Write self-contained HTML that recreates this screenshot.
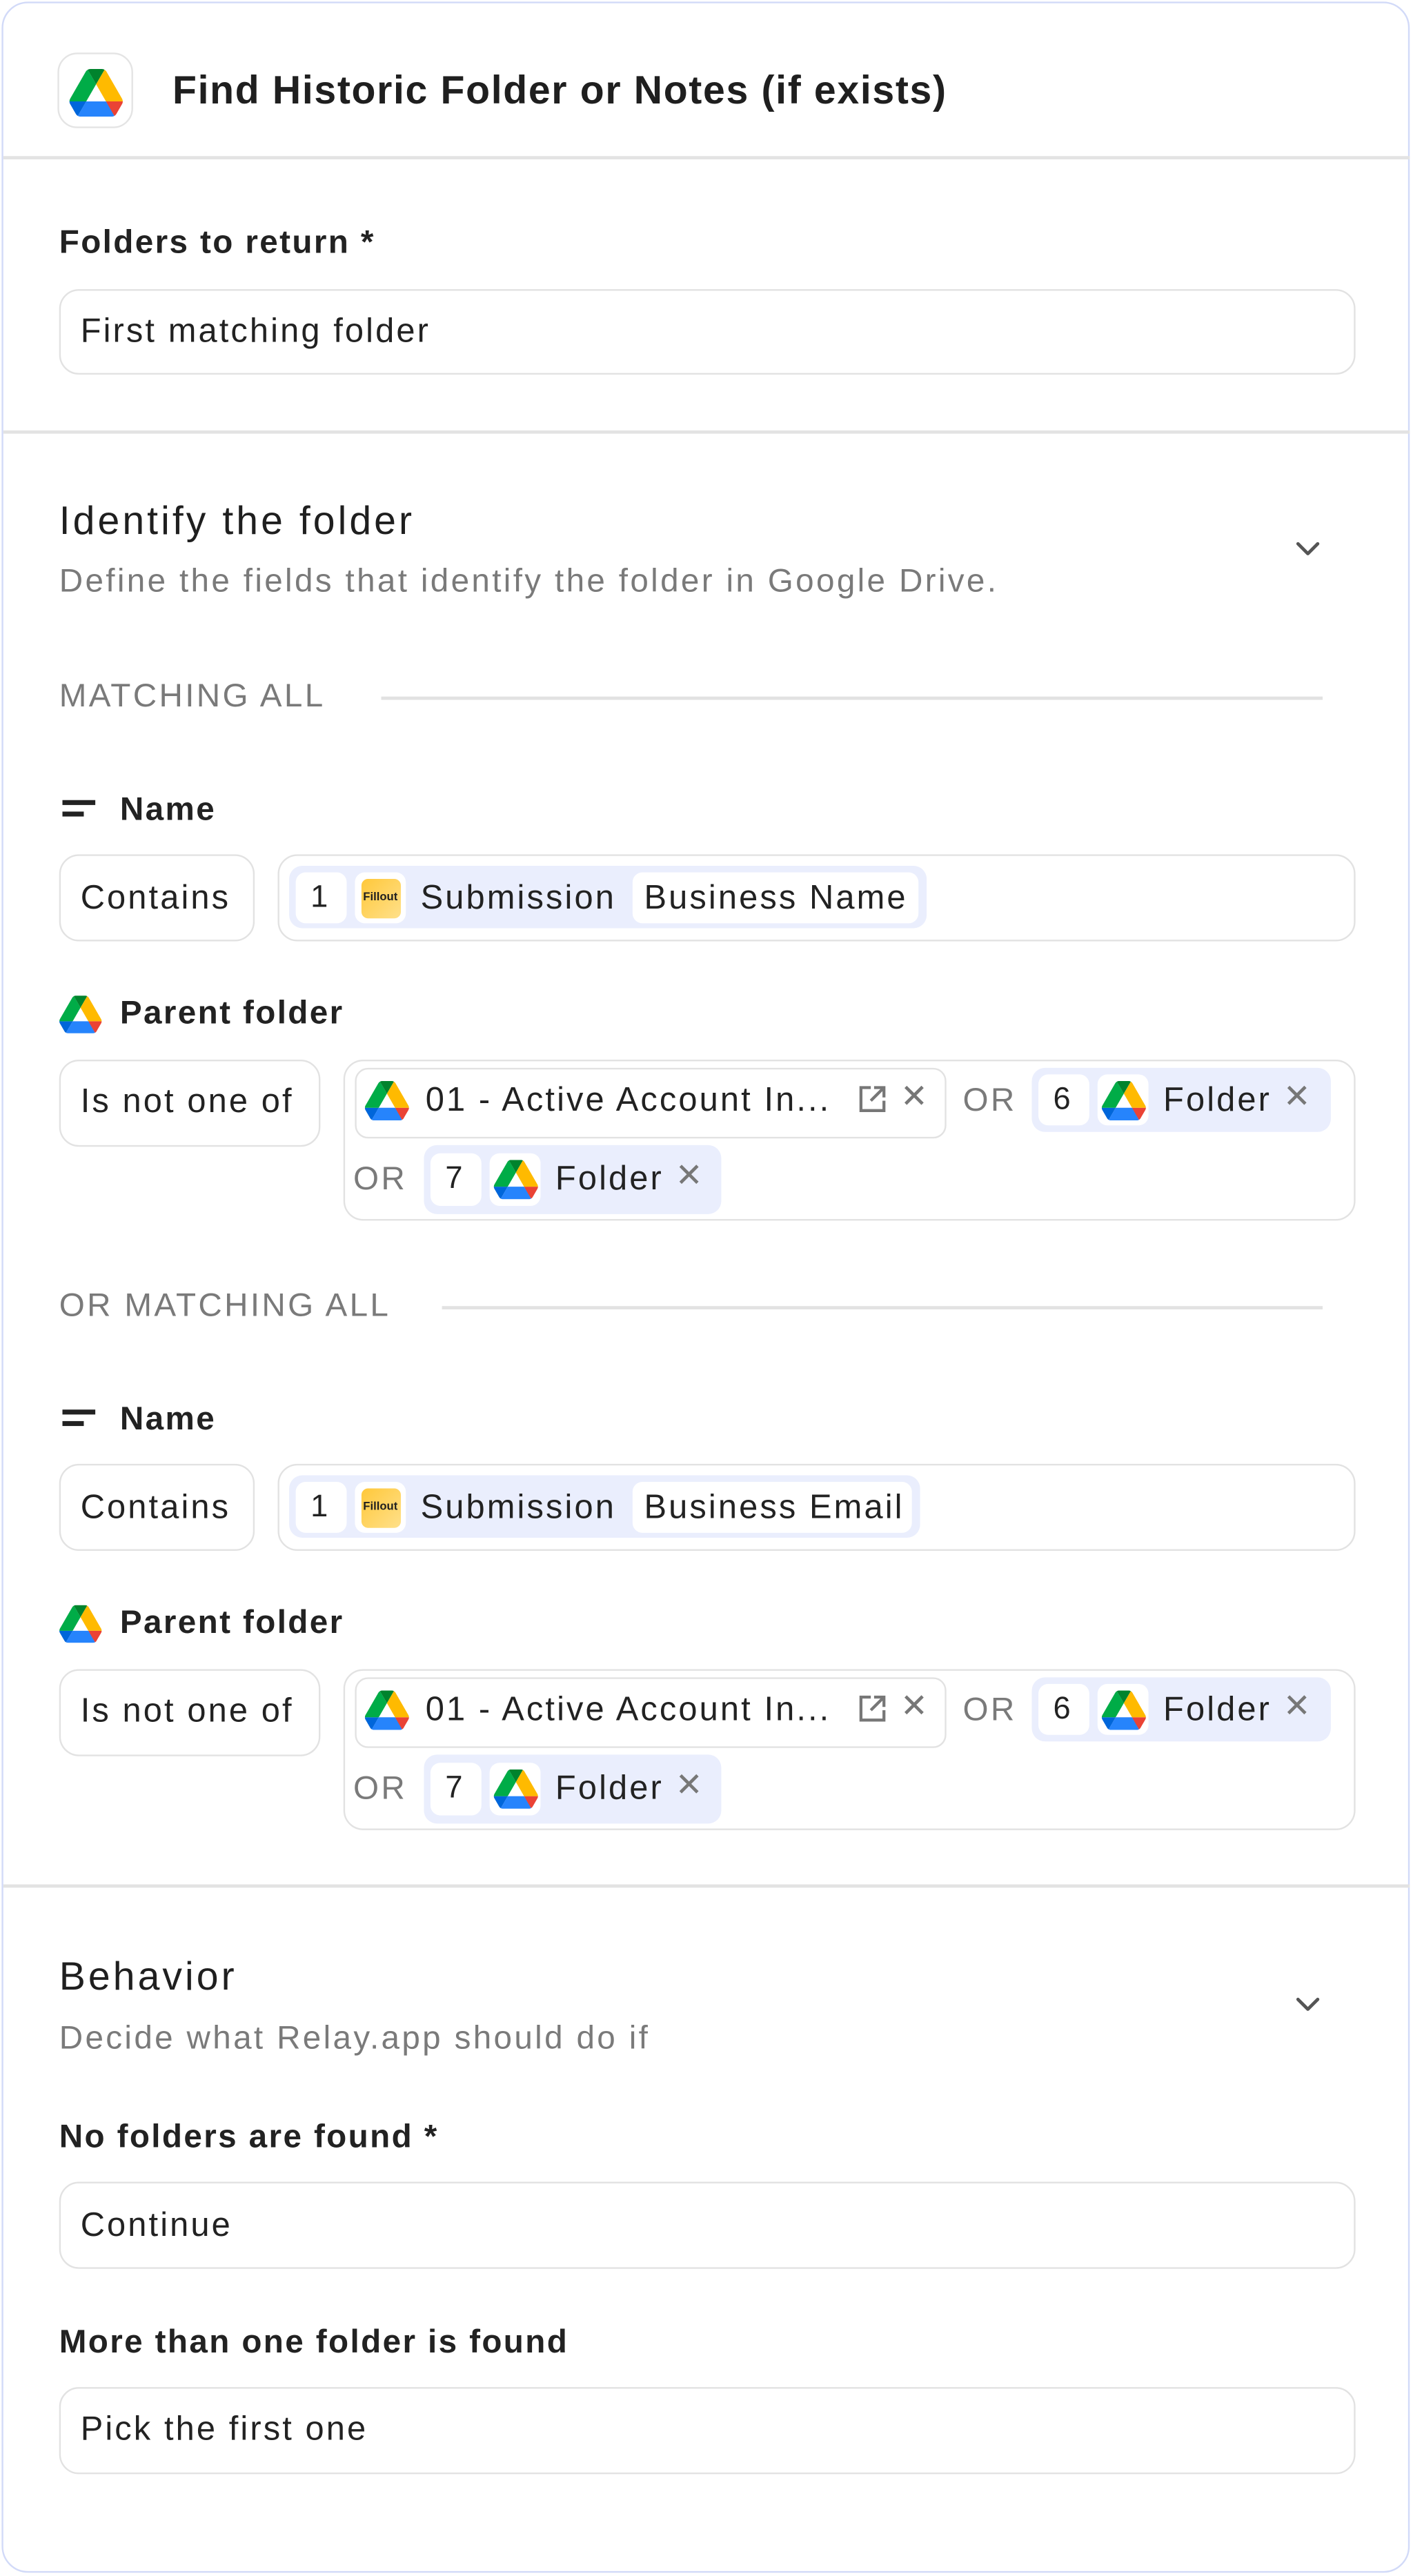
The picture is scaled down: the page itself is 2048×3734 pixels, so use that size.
<!DOCTYPE html>
<html><head><meta charset="utf-8"><style>
html,body{margin:0;padding:0;background:#fff;width:2048px;height:3732px;overflow:hidden}
#w{position:absolute;left:0;top:0;width:860px;height:1568px;transform:scale(2.3814);transform-origin:0 0;font-family:"Liberation Sans",sans-serif;color:#1f1f1f}
.a{position:absolute}
.card{left:1px;top:1px;width:855px;height:1563px;border:1.5px solid #d2daf8;border-radius:16px}
.hr{left:2px;width:856px;height:1.5px;background:#e3e3e3}
.t{position:absolute;white-space:nowrap;line-height:1}
.lbl{font-size:20px;font-weight:bold;color:#222;letter-spacing:1px}
.inp{position:absolute;border:1.5px solid #e2e2e2;border-radius:12px;box-sizing:border-box;background:#fff}
.it{font-size:20.5px;color:#222;letter-spacing:1.3px}
.g{color:#7a7a7a;letter-spacing:1.4px}
.h{font-size:24px;letter-spacing:1.7px}
.chip{position:absolute;border-radius:8px;box-sizing:border-box}
.bl{background:#eaeefd}
.wh{background:#fff;border-radius:6px;position:absolute}
.line{height:1.5px;background:#e2e2e2}
.x{color:#777;font-size:20px}
</style></head><body><div id="w">
<svg width="0" height="0" style="position:absolute"><defs>
<symbol id="dr" viewBox="0 0 87.3 78"><path d="m6.6 66.850 3.85 6.65c.8 1.4 1.950 2.5 3.3 3.3l13.75-23.8h-27.5c0 1.550.4 3.1 1.2 4.5z" fill="#0066da"/><path d="m43.65 25-13.75-23.8c-1.35.8-2.5 1.9-3.3 3.3l-25.4 44a9.06 9.06 0 0 0 -1.2 4.5h27.5z" fill="#00ac47"/><path d="m73.55 76.8c1.35-.8 2.5-1.9 3.3-3.3l1.6-2.75 7.65-13.25c.8-1.4 1.2-2.95 1.2-4.5h-27.502l5.852 11.5z" fill="#ea4335"/><path d="m43.65 25 13.75-23.8c-1.35-.8-2.9-1.2-4.5-1.2h-18.5c-1.6 0-3.15.45-4.5 1.2z" fill="#00832d"/><path d="m59.8 53h-32.3l-13.75 23.8c1.35.8 2.9 1.2 4.5 1.2h50.8c1.6 0 3.15-.45 4.5-1.2z" fill="#2684fc"/><path d="m73.4 26.5-12.7-22c-.8-1.4-1.95-2.5-3.3-3.3l-13.75 23.8 16.15 28h27.45c0-1.55-.4-3.1-1.2-4.5z" fill="#ffba00"/></symbol>
<symbol id="ch" viewBox="0 0 20 20"><path d="M4 7l6 6 6-6" fill="none" stroke="#555" stroke-width="2" stroke-linecap="round" stroke-linejoin="round"/></symbol>
<symbol id="ext" viewBox="0 0 20 20"><path d="M9 3H3v14h14v-6M11 3h6v6M17 3L9 11" fill="none" stroke="#777" stroke-width="1.8"/></symbol>
</defs></svg>
<div class="a card"></div>
<div class="a" style="left:35px;top:32px;width:46px;height:46px;border:1.5px solid #e4e4e4;border-radius:12px;box-sizing:border-box"></div>
<svg class="a" style="left:42px;top:42px" width="33" height="29"><use href="#dr"/></svg>
<div class="t" style="left:105px;top:44px;font-size:24px;font-weight:bold;letter-spacing:.7px">Find Historic Folder or Notes (if exists)</div>
<div class="a hr" style="top:95px"></div>
<div class="t lbl" style="left:36px;top:138px">Folders to return *</div>
<div class="inp" style="left:36px;top:176px;width:789px;height:52px"></div>
<div class="t it" style="left:49px;top:192px">First matching folder</div>
<div class="a hr" style="top:262px"></div>
<div class="t h" style="left:36px;top:306px">Identify the folder</div>
<div class="t g" style="left:36px;top:344px;font-size:20px">Define the fields that identify the folder in Google Drive.</div>
<svg class="a" style="left:786px;top:324px" width="20" height="20"><use href="#ch"/></svg>
<div class="t g" style="left:36px;top:414px;font-size:20px">MATCHING ALL</div>
<div class="a line" style="left:232px;top:424px;width:573px"></div>

<div class="a" style="left:38px;top:487px;width:20px;height:3px;background:#222"></div>
<div class="a" style="left:38px;top:494px;width:13px;height:3px;background:#222"></div>
<div class="t lbl" style="left:73px;top:483px">Name</div>
<div class="inp" style="left:36px;top:520px;width:119px;height:53px"></div>
<div class="t it" style="left:49px;top:537px">Contains</div>
<div class="inp" style="left:169px;top:520px;width:656px;height:53px"></div>
<div class="chip bl" style="left:176px;top:527px;width:388px;height:38px"></div>
<div class="wh" style="left:180px;top:531px;width:31px;height:31px"></div>
<div class="t it" style="left:189px;top:537px;font-size:19px">1</div>
<div class="wh" style="left:216px;top:531px;width:31px;height:31px"></div>
<div class="a" style="left:220px;top:535px;width:24px;height:24px;border-radius:4px;background:linear-gradient(135deg,#ffc83a,#ffe08a)"></div>
<div class="t" style="left:221px;top:543px;font-size:7px;font-weight:bold">Fillout</div>
<div class="t it" style="left:256px;top:537px">Submission</div>
<div class="wh" style="left:385px;top:531px;width:174px;height:31px"></div>
<div class="t it" style="left:392px;top:537px">Business Name</div>

<svg class="a" style="left:36px;top:606px" width="26" height="23"><use href="#dr"/></svg>
<div class="t lbl" style="left:73px;top:607px">Parent folder</div>
<div class="inp" style="left:36px;top:645px;width:159px;height:53px"></div>
<div class="t it" style="left:49px;top:661px">Is not one of</div>
<div class="inp" style="left:209px;top:645px;width:616px;height:98px"></div>
<div class="chip" style="left:216px;top:650px;width:360px;height:43px;border:1.5px solid #e2e2e2"></div>
<svg class="a" style="left:222px;top:658px" width="27" height="24"><use href="#dr"/></svg>
<div class="t it" style="left:259px;top:660px">01 - Active Account In...</div>
<svg class="a" style="left:521px;top:659px" width="20" height="20"><use href="#ext"/></svg>
<div class="t x" style="left:548px;top:658px">✕</div>
<div class="t g" style="left:586px;top:660px;font-size:20px">OR</div>
<div class="chip bl" style="left:628px;top:650px;width:182px;height:39px"></div>
<div class="wh" style="left:632px;top:654px;width:31px;height:31px"></div>
<div class="t it" style="left:641px;top:660px;font-size:19px">6</div>
<div class="wh" style="left:668px;top:654px;width:31px;height:31px"></div>
<svg class="a" style="left:670px;top:658px" width="28" height="24"><use href="#dr"/></svg>
<div class="t it" style="left:708px;top:660px">Folder</div>
<div class="t x" style="left:781px;top:658px">✕</div>
<div class="t g" style="left:215px;top:708px;font-size:20px">OR</div>
<div class="chip bl" style="left:258px;top:697px;width:181px;height:42px"></div>
<div class="wh" style="left:262px;top:702px;width:31px;height:32px"></div>
<div class="t it" style="left:271px;top:708px;font-size:19px">7</div>
<div class="wh" style="left:298px;top:702px;width:31px;height:32px"></div>
<svg class="a" style="left:300px;top:706px" width="28" height="24"><use href="#dr"/></svg>
<div class="t it" style="left:338px;top:708px">Folder</div>
<div class="t x" style="left:411px;top:706px">✕</div>

<div class="t g" style="left:36px;top:785px;font-size:20px">OR MATCHING ALL</div>
<div class="a line" style="left:269px;top:795px;width:536px"></div>

<div class="a" style="left:38px;top:858px;width:20px;height:3px;background:#222"></div>
<div class="a" style="left:38px;top:865px;width:13px;height:3px;background:#222"></div>
<div class="t lbl" style="left:73px;top:854px">Name</div>
<div class="inp" style="left:36px;top:891px;width:119px;height:53px"></div>
<div class="t it" style="left:49px;top:908px">Contains</div>
<div class="inp" style="left:169px;top:891px;width:656px;height:53px"></div>
<div class="chip bl" style="left:176px;top:898px;width:384px;height:38px"></div>
<div class="wh" style="left:180px;top:902px;width:31px;height:31px"></div>
<div class="t it" style="left:189px;top:908px;font-size:19px">1</div>
<div class="wh" style="left:216px;top:902px;width:31px;height:31px"></div>
<div class="a" style="left:220px;top:906px;width:24px;height:24px;border-radius:4px;background:linear-gradient(135deg,#ffc83a,#ffe08a)"></div>
<div class="t" style="left:221px;top:914px;font-size:7px;font-weight:bold">Fillout</div>
<div class="t it" style="left:256px;top:908px">Submission</div>
<div class="wh" style="left:385px;top:902px;width:170px;height:31px"></div>
<div class="t it" style="left:392px;top:908px">Business Email</div>

<svg class="a" style="left:36px;top:977px" width="26" height="23"><use href="#dr"/></svg>
<div class="t lbl" style="left:73px;top:978px">Parent folder</div>
<div class="inp" style="left:36px;top:1016px;width:159px;height:53px"></div>
<div class="t it" style="left:49px;top:1032px">Is not one of</div>
<div class="inp" style="left:209px;top:1016px;width:616px;height:98px"></div>
<div class="chip" style="left:216px;top:1021px;width:360px;height:43px;border:1.5px solid #e2e2e2"></div>
<svg class="a" style="left:222px;top:1029px" width="27" height="24"><use href="#dr"/></svg>
<div class="t it" style="left:259px;top:1031px">01 - Active Account In...</div>
<svg class="a" style="left:521px;top:1030px" width="20" height="20"><use href="#ext"/></svg>
<div class="t x" style="left:548px;top:1029px">✕</div>
<div class="t g" style="left:586px;top:1031px;font-size:20px">OR</div>
<div class="chip bl" style="left:628px;top:1021px;width:182px;height:39px"></div>
<div class="wh" style="left:632px;top:1025px;width:31px;height:31px"></div>
<div class="t it" style="left:641px;top:1031px;font-size:19px">6</div>
<div class="wh" style="left:668px;top:1025px;width:31px;height:31px"></div>
<svg class="a" style="left:670px;top:1029px" width="28" height="24"><use href="#dr"/></svg>
<div class="t it" style="left:708px;top:1031px">Folder</div>
<div class="t x" style="left:781px;top:1029px">✕</div>
<div class="t g" style="left:215px;top:1079px;font-size:20px">OR</div>
<div class="chip bl" style="left:258px;top:1068px;width:181px;height:42px"></div>
<div class="wh" style="left:262px;top:1073px;width:31px;height:32px"></div>
<div class="t it" style="left:271px;top:1079px;font-size:19px">7</div>
<div class="wh" style="left:298px;top:1073px;width:31px;height:32px"></div>
<svg class="a" style="left:300px;top:1077px" width="28" height="24"><use href="#dr"/></svg>
<div class="t it" style="left:338px;top:1079px">Folder</div>
<div class="t x" style="left:411px;top:1077px">✕</div>

<div class="a hr" style="top:1147px"></div>
<div class="t h" style="left:36px;top:1192px">Behavior</div>
<div class="t g" style="left:36px;top:1231px;font-size:20px">Decide what Relay.app should do if</div>
<svg class="a" style="left:786px;top:1210px" width="20" height="20"><use href="#ch"/></svg>
<div class="t lbl" style="left:36px;top:1291px">No folders are found *</div>
<div class="inp" style="left:36px;top:1328px;width:789px;height:53px"></div>
<div class="t it" style="left:49px;top:1345px">Continue</div>
<div class="t lbl" style="left:36px;top:1416px">More than one folder is found</div>
<div class="inp" style="left:36px;top:1453px;width:789px;height:53px"></div>
<div class="t it" style="left:49px;top:1469px">Pick the first one</div>
</div></body></html>
